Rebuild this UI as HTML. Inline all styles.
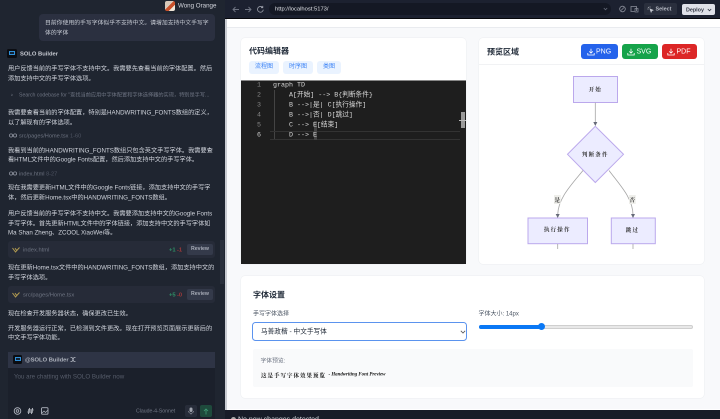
<!DOCTYPE html>
<html lang="zh"><head><meta charset="utf-8"><title>SOLO Builder</title>
<style>
html,body{margin:0;padding:0;width:720px;height:419px;overflow:hidden;background:#f8f9fb}
body{position:relative;font-family:"Liberation Sans","Noto Sans CJK SC",sans-serif;filter:blur(.3px)}
div,span.a,svg.a{position:absolute}
.t{position:absolute;white-space:nowrap;line-height:10px;height:10px;transform:translateY(.7px)}
.p{color:#d0d4dc;font-size:6.2px;left:8px}
.s{color:#6e7482;font-size:5.6px}
.card{background:#262b38;border-radius:3px;left:8px;width:207px}
.rev{background:#343a4a;border-radius:2px;left:187px;width:26px;height:11px;color:#a6abb6;font-size:5.2px;font-weight:700;text-align:center;line-height:11px}
.btn{top:44px;height:15px;border-radius:3px}
.tab{top:61px;height:13px;background:#eaf3ff;color:#3b82f6;border-radius:3px;font-size:6px;line-height:13px;text-align:center}
.h{font-size:8px;font-weight:700;color:#1f2937}
.w{background:#fff;border-radius:4px;box-shadow:0 0 0 .6px #eef0f3}
.c{font-family:"Liberation Mono","Noto Sans CJK SC",monospace;font-size:6.67px;color:#d8d8d8;left:273px;white-space:pre}
.n{font-family:"Liberation Mono",monospace;font-size:6.67px;color:#858585;left:257px}
</style></head><body>

<!-- left panel -->
<div style="left:0;top:0;width:225px;height:419px;background:#1f2530"></div>
<div style="left:165px;top:1px;width:10px;height:10px;border-radius:2px;background:linear-gradient(135deg,#d8c8b8 0 45%,#c8502a 45% 70%,#efe6d8 70%)"></div>
<div class="t" style="left:178px;top:1px;font-size:6.2px;color:#d4d7de">Wong Orange</div>
<div style="left:39px;top:14px;width:176px;height:27px;background:#2b3040;border-radius:4px"></div>
<div class="t" style="left:45px;top:18px;font-size:5.85px;color:#c6cad3">目前你使用的手写字体似乎不支持中文。请增加支持中文手写字</div>
<div class="t" style="left:45px;top:28px;font-size:5.85px;color:#c6cad3">体的字体</div>

<div style="left:7px;top:49px;width:10px;height:9px;background:#0b0d12;border-radius:1.5px"></div>
<div style="left:9px;top:51px;width:6px;height:4px;border:.7px solid #2f8fd8;box-sizing:border-box;background:#123"></div>
<div class="t" style="left:20px;top:48.5px;font-size:5.8px;font-weight:700;color:#c9ccd4">SOLO Builder</div>

<div class="t p" style="top:64px">用户反馈当前的手写字体不支持中文。我需要先查看当前的字体配置。然后</div>
<div class="t p" style="top:74px">添加支持中文的手写字体选项。</div>
<div class="t s" style="left:11px;top:89.5px;color:#8a8f9b">›</div>
<div class="t s" style="left:19px;top:89.5px;font-size:5.2px">Search codebase for "查找当前应用中字体配置和字体选择器的实现，特别是手写...</div>
<div class="t p" style="top:108px">我需要查看当前的字体配置，特别是HANDWRITING_FONTS数组的定义，</div>
<div class="t p" style="top:117.5px">以了解现有的字体选项。</div>
<svg class="a" style="left:9px;top:133px" width="8" height="5"><circle cx="2" cy="2.5" r="1.6" fill="none" stroke="#8f94a0" stroke-width=".8"/><circle cx="6" cy="2.5" r="1.6" fill="none" stroke="#8f94a0" stroke-width=".8"/></svg>
<div class="t s" style="left:19px;top:130.5px">src/pages/Home.tsx <span style="color:#4f5563">1-60</span></div>
<div class="t p" style="top:145.5px">我看到当前的HANDWRITING_FONTS数组只包含英文手写字体。我需要查</div>
<div class="t p" style="top:155px">看HTML文件中的Google Fonts配置，然后添加支持中文的手写字体。</div>
<svg class="a" style="left:9px;top:171px" width="8" height="5"><circle cx="2" cy="2.5" r="1.6" fill="none" stroke="#8f94a0" stroke-width=".8"/><circle cx="6" cy="2.5" r="1.6" fill="none" stroke="#8f94a0" stroke-width=".8"/></svg>
<div class="t s" style="left:19px;top:168.5px">index.html <span style="color:#4f5563">8-27</span></div>
<div class="t p" style="top:183px">现在我需要更新HTML文件中的Google Fonts链接，添加支持中文的手写字</div>
<div class="t p" style="top:193px">体，然后更新Home.tsx中的HANDWRITING_FONTS数组。</div>
<div class="t p" style="top:209px">用户反馈当前的手写字体不支持中文。我需要添加支持中文的Google Fonts</div>
<div class="t p" style="top:218.5px">手写字体。首先更新HTML文件中的字体链接，添加支持中文的手写字体如</div>
<div class="t p" style="top:228px">Ma Shan Zheng、ZCOOL XiaoWei等。</div>

<div class="card" style="top:241px;height:17px"></div>
<svg class="a" style="left:12px;top:247px" width="8" height="6"><path d="M.5 1L3.5 5 7.5 .5M3 1.2L5 3.8" fill="none" stroke="#b09a50" stroke-width="1"/></svg>
<div class="t s" style="left:23px;top:244.5px;font-size:5.8px">index.html</div>
<div class="t" style="left:169px;top:244.5px;font-size:5.8px;font-weight:700;color:#2f8f66">+1</div>
<div class="t" style="left:177px;top:244.5px;font-size:5.8px;font-weight:700;color:#a33a3a">-1</div>
<div class="rev" style="top:244px">Review</div>

<div class="t p" style="top:263px">现在更新Home.tsx文件中的HANDWRITING_FONTS数组，添加支持中文的</div>
<div class="t p" style="top:272.5px">手写字体选项。</div>

<div class="card" style="top:286px;height:17px"></div>
<svg class="a" style="left:12px;top:292px" width="8" height="6"><path d="M.5 1L3.5 5 7.5 .5M3 1.2L5 3.8" fill="none" stroke="#b09a50" stroke-width="1"/></svg>
<div class="t s" style="left:23px;top:289.5px;font-size:5.8px">src/pages/Home.tsx</div>
<div class="t" style="left:169px;top:289.5px;font-size:5.8px;font-weight:700;color:#2f8f66">+5</div>
<div class="t" style="left:177px;top:289.5px;font-size:5.8px;font-weight:700;color:#a33a3a">-0</div>
<div class="rev" style="top:289px">Review</div>

<div class="t p" style="top:308.5px">现在检查开发服务器状态，确保更改已生效。</div>
<div class="t p" style="top:323.5px">开发服务器运行正常，已检测到文件更改。现在打开预览页面展示更新后的</div>
<div class="t p" style="top:333px">中文手写字体功能。</div>

<div style="left:220px;top:240px;width:4px;height:44px;background:#2a303c"></div>

<!-- input -->
<div style="left:8px;top:352px;width:207px;height:67px;background:#1b202b"></div>
<div style="left:8px;top:352px;width:207px;height:15.5px;background:#2e3445"></div>
<div style="left:13px;top:355px;width:9px;height:9px;background:#0b0d12;border-radius:1.5px"></div>
<div style="left:14.5px;top:357px;width:6px;height:4px;border:.7px solid #2f8fd8;box-sizing:border-box;background:#123"></div>
<div class="t" style="left:25px;top:354.5px;font-size:5.8px;font-weight:700;color:#aeb3bd">@SOLO Builder</div>
<svg class="a" style="left:70px;top:356px" width="6" height="7"><path d="M.5 1.5h1.500l2 4h1.500M.5 5.500H2l2-4h1.500" fill="none" stroke="#b4b8c2" stroke-width=".8"/></svg>
<div class="t" style="left:14px;top:372px;font-size:6.2px;color:#565c6a">You are chatting with SOLO Builder now</div>
<svg class="a" style="left:13px;top:406px" width="40" height="10" viewBox="0 0 40 10">
<circle cx="4.5" cy="5" r="3.3" fill="none" stroke="#b0b4be" stroke-width=".9"/><circle cx="4.5" cy="5" r="1.3" fill="none" stroke="#b0b4be" stroke-width=".8"/>
<path d="M16.500 2l-1 6M19.500 2l-1 6M15 4h5.500M14.500 6h5.500" stroke="#c0c4cc" stroke-width=".9" fill="none"/>
<rect x="28.500" y="1.700" width="6.500" height="6.500" rx="1" fill="none" stroke="#b0b4be" stroke-width=".9"/><path d="M29 7l2-2 1.500 1.500L35 4" stroke="#b0b4be" stroke-width=".7" fill="none"/>
</svg>
<div class="t" style="left:136px;top:406px;font-size:5.2px;color:#737886">Claude-4-Sonnet</div>
<div style="left:185px;top:405px;width:12px;height:12px;background:#272c39;border-radius:2px"></div>
<svg class="a" style="left:188px;top:407px" width="6" height="8"><rect x="1.500" y=".5" width="3" height="4.500" rx="1.500" fill="#a0a4ae"/><path d="M.5 4c0 3 5 3 5 0M3 6v1.500" stroke="#a0a4ae" stroke-width=".6" fill="none"/></svg>
<div style="left:199.500px;top:405px;width:12px;height:12px;background:#1e4a3c;border-radius:2px"></div>
<svg class="a" style="left:202.500px;top:407.500px" width="6" height="7"><path d="M3 6.500V1M1 3l2-2 2 2" stroke="#3f9a74" stroke-width=".8" fill="none"/></svg>

<!-- browser bar -->
<div style="left:225px;top:0;width:2px;height:419px;background:#c9ccd2"></div>
<div style="left:227px;top:18px;width:493px;height:8.500px;background:#fff;border-bottom:.7px solid #e9ebef"></div>
<div style="left:225px;top:0;width:495px;height:17.500px;background:#1c2130;border-bottom:1px solid #07080c"></div>
<svg class="a" style="left:231px;top:5px" width="36" height="9" viewBox="0 0 36 9">
<path d="M8 4.500H2M4.500 2L2 4.500 4.500 7" stroke="#6f7482" stroke-width=".9" fill="none"/>
<path d="M14 4.500h6M17.500 2L20 4.500 17.500 7" stroke="#6f7482" stroke-width=".9" fill="none"/>
<path d="M31.500 2.300a2.900 2.900 0 1 0 .8 2.400M31.800 .9v1.800H30" stroke="#9a9ea9" stroke-width=".8" fill="none"/>
</svg>
<div style="left:269px;top:3px;width:342px;height:12px;background:#141824;border-radius:6px"></div>
<div class="t" style="left:275px;top:4px;font-size:5.8px;color:#dfe1e6">http://localhost:5173/</div>
<svg class="a" style="left:603px;top:7px" width="5" height="4"><path d="M.8 1L2.500 2.800 4.200 1" stroke="#646a78" stroke-width=".8" fill="none"/></svg>
<svg class="a" style="left:618px;top:4px" width="24" height="10" viewBox="0 0 24 10">
<circle cx="4.500" cy="5" r="2.800" fill="none" stroke="#8c909c" stroke-width=".8"/><path d="M3 6.500L6 3.500" stroke="#8c909c" stroke-width=".7"/>
<path d="M13 7V2.500h5.500V7M12.500 7.500h4" stroke="#8c909c" stroke-width=".8" fill="none"/><rect x="17" y="4.500" width="3" height="3.500" fill="none" stroke="#8c909c" stroke-width=".7"/>
</svg>
<div style="left:644px;top:3px;width:33px;height:12px;background:#2a2f3d;border-radius:2px"></div>
<svg class="a" style="left:647px;top:5.500px" width="7" height="7"><path d="M1 1l.8.8M3 .5v1M.5 3h1M3 3l3 1.200-1.300.6-.6 1.300z" stroke="#c6c9d1" stroke-width=".7" fill="#c6c9d1"/></svg>
<div class="t" style="left:655.500px;top:4px;font-size:5.400px;font-weight:700;color:#b9bdc7">Select</div>
<div style="left:682px;top:4px;width:33px;height:11px;background:#dfe1e8;border-radius:2px"></div>
<div class="t" style="left:686px;top:4.500px;font-size:5.400px;font-weight:700;color:#333845">Deploy</div>
<svg class="a" style="left:707px;top:7.500px" width="5" height="4"><path d="M.8 1L2.500 2.800 4.200 1" stroke="#333845" stroke-width=".8" fill="none"/></svg>

<!-- editor card -->
<div class="w" style="left:241px;top:38px;width:225px;height:226px"></div>
<div class="t h" style="left:249px;top:46px">代码编辑器</div>
<div class="tab" style="left:249px;width:30px">流程图</div>
<div class="tab" style="left:283px;width:30px">时序图</div>
<div class="tab" style="left:317px;width:24px">类图</div>
<div style="left:241px;top:80px;width:225px;height:184px;background:#1e1e1e;border-top:.7px solid #888;box-sizing:border-box"></div>
<div style="left:274px;top:90px;width:.6px;height:50px;background:#444"></div>
<div style="left:270px;top:130.500px;width:190px;height:9.500px;border-top:.6px solid #333;border-bottom:.6px solid #333;box-sizing:border-box"></div>
<div style="left:314px;top:120.500px;width:3px;height:19.500px;background:#444"></div>
<div style="left:461px;top:112px;width:3.500px;height:16px;background:#9a9a9a"></div>
<div style="left:459px;top:119.500px;width:7px;height:1px;background:#bbb"></div>
<div class="t n" style="top:80px">1</div><div class="t n" style="top:90px">2</div><div class="t n" style="top:100px">3</div><div class="t n" style="top:110px">4</div><div class="t n" style="top:120px">5</div><div class="t n" style="top:130px;color:#d0d0d0">6</div>
<div class="t c" style="top:80px">graph TD</div>
<div class="t c" style="top:90px">    A[开始] --&gt; B{判断条件}</div>
<div class="t c" style="top:100px">    B --&gt;|是| C[执行操作]</div>
<div class="t c" style="top:110px">    B --&gt;|否| D[跳过]</div>
<div class="t c" style="top:120px">    C --&gt; E[结束]</div>
<div class="t c" style="top:130px">    D --&gt; E</div>

<!-- preview card -->
<div class="w" style="left:479px;top:38px;width:225px;height:226px"></div>
<div style="left:479px;top:64px;width:225px;height:.8px;background:#f1f2f4"></div>
<div class="t h" style="left:487px;top:47px">预览区域</div>
<div class="btn" style="left:581px;width:36.500px;background:#2563eb"></div>
<div class="btn" style="left:621.500px;width:36px;background:#16a34a"></div>
<div class="btn" style="left:661.500px;width:35px;background:#dc2626"></div>
<svg class="a" style="left:587px;top:48px" width="8" height="8"><path d="M4 .8v4.200M2.200 3.400L4 5.200l1.800-1.800M.8 5v2h6.400V5" stroke="#fff" stroke-width=".8" fill="none"/></svg>
<svg class="a" style="left:627px;top:48px" width="8" height="8"><path d="M4 .8v4.200M2.200 3.400L4 5.200l1.800-1.800M.8 5v2h6.400V5" stroke="#fff" stroke-width=".8" fill="none"/></svg>
<svg class="a" style="left:667px;top:48px" width="8" height="8"><path d="M4 .8v4.200M2.200 3.400L4 5.200l1.800-1.800M.8 5v2h6.400V5" stroke="#fff" stroke-width=".8" fill="none"/></svg>
<div class="t" style="left:596px;top:46.500px;font-size:7px;color:#fff">PNG</div>
<div class="t" style="left:636.500px;top:46.500px;font-size:7px;color:#fff">SVG</div>
<div class="t" style="left:676.500px;top:46.500px;font-size:7px;color:#fff">PDF</div>

<svg class="a" style="left:479px;top:65px" width="225" height="199" viewBox="479 65 225 199">
<g fill="#ececff" stroke="#bba8ec" stroke-width="1">
<rect x="573.500" y="76.500" width="44" height="26"/>
<path d="M595.300 126.300L623.500 154.300 595.300 182.500 567.500 154.300Z"/>
<rect x="528" y="218" width="59.500" height="25.700"/>
<rect x="611.300" y="218" width="44" height="25.700"/>
</g>
<g fill="none" stroke="#a5a5a5" stroke-width=".8">
<path d="M595.300 102.700V122"/>
<path d="M583 170.500C572 184 558 198 557.700 215"/>
<path d="M609 170.500C619 184 633 198 633 215"/>
<path d="M557.700 244v5M633 244v5"/>
</g>
<g fill="#666a78"><path d="M593.300 122h4l-2 4z"/><path d="M555.700 214h4l-2 4z"/><path d="M631 214h4l-2 4z"/></g>
<rect x="554" y="195" width="6.700" height="9" fill="#eeeeea"/><rect x="629" y="195" width="6.700" height="9" fill="#eeeeea"/>
<g font-family="'Noto Serif CJK SC','Liberation Serif',serif" font-size="5.500" font-weight="700" fill="#333" text-anchor="middle">
<text x="595.300" y="91.500" letter-spacing="1.200">开始</text>
<text x="595.300" y="156.500" letter-spacing="1.200">判断条件</text>
<text x="557.300" y="231.500" letter-spacing="1.200">执行操作</text>
<text x="632.500" y="232" letter-spacing="1.200">跳过</text>
<text x="557.300" y="202">是</text>
<text x="632.300" y="202">否</text>
</g>
</svg>

<!-- font settings card -->
<div class="w" style="left:241px;top:276px;width:463px;height:122px"></div>
<div class="t h" style="left:253px;top:290px">字体设置</div>
<div class="t" style="left:253px;top:309px;font-size:6px;color:#4b5563">手写字体选择</div>
<div class="t" style="left:478.500px;top:309px;font-size:6px;color:#4b5563">字体大小: 14px</div>
<div style="left:252px;top:322px;width:215px;height:19px;box-sizing:border-box;background:#fff;border:1px solid #5b93ee;border-radius:3.500px"></div>
<div class="t" style="left:261px;top:326.500px;font-size:6.670px;color:#1f2937">马善政楷 - 中文手写体</div>
<svg class="a" style="left:460px;top:330px" width="6" height="4"><path d="M.8.8L3 3l2.200-2.200" stroke="#555" stroke-width=".8" fill="none"/></svg>
<div style="left:478.500px;top:325px;width:214.500px;height:3.500px;background:#e8e8e8;border:.5px solid #cfcfcf;border-radius:2px;box-sizing:border-box"></div>
<div style="left:478.500px;top:325px;width:63px;height:3.500px;background:#0a78f5;border-radius:2px"></div>
<div style="left:537.500px;top:323.200px;width:7px;height:7px;background:#0a78f5;border-radius:50%"></div>
<div style="left:252.500px;top:348.700px;width:440px;height:38px;background:#f9fafb;border-radius:2px"></div>
<div class="t" style="left:260.500px;top:356px;font-size:5.800px;color:#6b7280">字体预览:</div>
<div class="t" style="left:261px;top:369.500px;font-family:'Noto Serif CJK SC','Liberation Serif',serif;font-size:5.500px;font-weight:700;letter-spacing:1px;color:#111">这是手写字体效果预览</div>
<div class="t" style="left:328.500px;top:369.500px;font-family:'Liberation Serif',serif;font-style:italic;font-weight:700;font-size:4.900px;color:#111">- Handwriting Font Preview</div>

<!-- bottom bar -->
<div style="left:227px;top:409px;width:493px;height:1px;background:#fff"></div>
<div style="left:225px;top:410px;width:495px;height:9px;background:#181c28"></div>
<div style="left:231px;top:417px;width:5px;height:5px;border-radius:50%;background:#aaa"></div>
<div class="t" style="left:238px;top:414.500px;font-size:7px;color:#d4d6dc">No new changes detected</div>
</body></html>
